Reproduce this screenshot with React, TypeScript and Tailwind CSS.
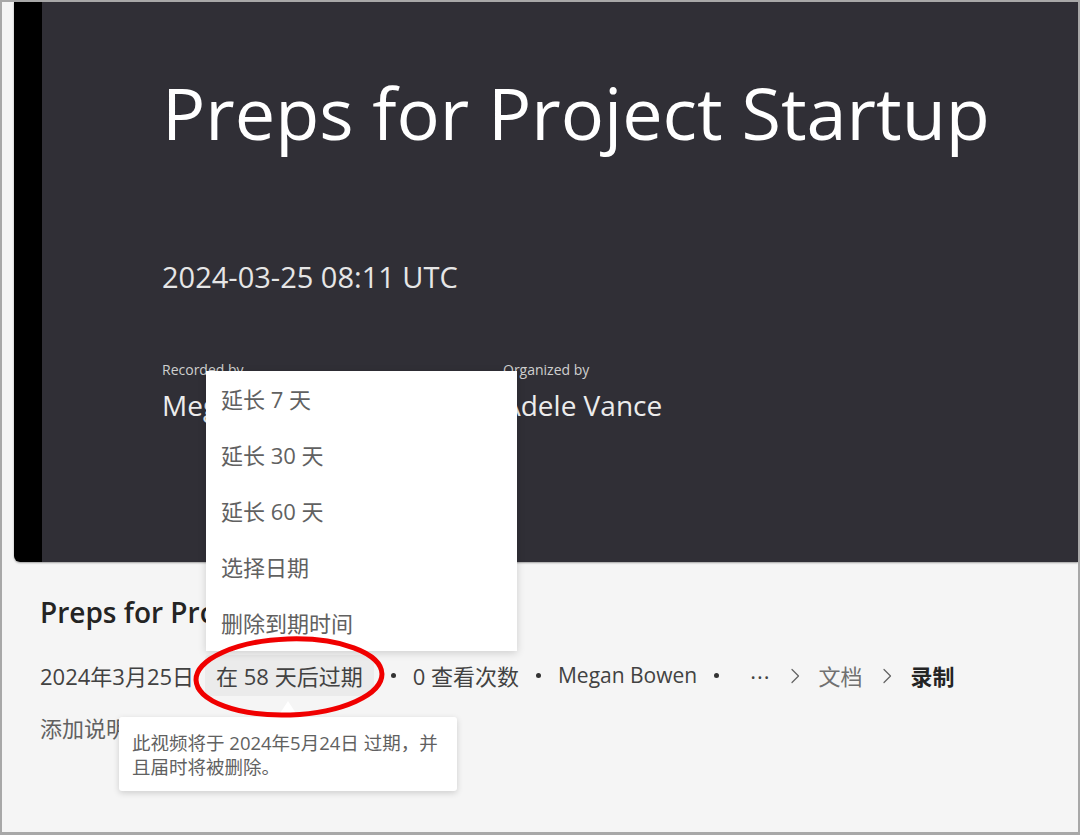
import React from 'react';

const menuItems = ['延长 7 天', '延长 30 天', '延长 60 天', '选择日期', '删除到期时间'];

function Dot() {
  return <span className="mx-[17px] w-[5px] h-[5px] rounded-full bg-[#333]" />;
}

function Chevron() {
  return (
    <svg className="w-[12px] h-[18px] mx-[18px]" viewBox="0 0 12 18" fill="none" stroke="#616161" strokeWidth={1.2}>
      <path d="M3 2.5L9.5 9L3 15.5" strokeLinecap="round" strokeLinejoin="round" />
    </svg>
  );
}

export default function App() {
  return (
    <div
      className="relative w-[1080px] h-[835px] overflow-hidden bg-[#f5f5f5] border-2 border-b-[3px] border-[#a8a8a8]"
      style={{ fontFamily: '"Open Sans", "Noto Sans CJK SC", sans-serif' }}
    >
      {/* Video thumbnail */}
      <div className="ml-3 h-[560px] flex rounded-bl-md overflow-hidden shadow-[0_1px_2px_rgba(0,0,0,0.35)]">
        <div className="w-[28px] bg-black" />
        <div className="flex-1 bg-[#302f36] pl-[120px] pt-[74px] text-white">
          <h2 className="text-[72px] leading-none">Preps for Project Startup</h2>
          <p className="mt-[114px] text-[29px] leading-none text-[#e6e6e6]">2024-03-25 08:11 UTC</p>
          <div className="mt-[72px] flex">
            <div className="w-[341px]">
              <p className="text-[14px] leading-none text-[#cfcfcf]">Recorded by</p>
              <p className="mt-[14px] text-[28px] leading-none text-[#ececec]">Megan Bowen</p>
            </div>
            <div>
              <p className="text-[14px] leading-none text-[#cfcfcf]">Organized by</p>
              <p className="mt-[14px] text-[28px] leading-none text-[#ececec]">Adele Vance</p>
            </div>
          </div>
        </div>
      </div>

      {/* Details */}
      <div className="pl-[38px]">
        <h1 className="mt-[36px] text-[28px] leading-none font-semibold text-[#242424]">Preps for Project Startup</h1>
        <div className="mt-[29px] h-[41px] flex items-center text-[22px] text-[#424242] leading-none">
          <span>2024年3月25日</span>
          <span className="ml-[11px] h-[41px] px-[11px] flex items-center rounded bg-[#ebebeb]">在 58 天后过期</span>
          <Dot />
          <span>0 查看次数</span>
          <Dot />
          <span className="text-[21px]">Megan Bowen</span>
          <Dot />
          <span className="ml-[14px] text-[#424242] tracking-[1px]">···</span>
          <Chevron />
          <span className="text-[#707070]">文档</span>
          <Chevron />
          <span className="font-bold text-[#242424]">录制</span>
        </div>
        <p className="mt-[21px] text-[22px] leading-none text-[#616161]">添加说明</p>
      </div>

      {/* Expiry menu */}
      <div className="absolute left-[204px] top-[369px] w-[311px] bg-white shadow-[0_2px_8px_rgba(0,0,0,0.16)]">
        {menuItems.map((item) => (
          <div key={item} className="h-[56px] flex items-center pl-[15px] text-[22px] leading-none text-[#616161]">
            {item}
          </div>
        ))}
      </div>

      {/* Tooltip */}
      <div className="absolute left-[275px] top-[699px] w-0 h-0 border-l-[11px] border-r-[11px] border-b-[17px] border-l-transparent border-r-transparent border-b-white" />
      <div className="absolute left-[117px] top-[715px] w-[338px] h-[74px] bg-white rounded-[3px] shadow-[0_2px_6px_rgba(0,0,0,0.16)] px-[13px] pt-[14px] text-[18.5px] leading-[24px] text-[#616161]">
        此视频将于 2024年5月24日 过期，并
        <br />
        且届时将被删除。
      </div>

      {/* Annotation */}
      <svg className="absolute left-[186px] top-[630px] w-[200px] h-[90px]" viewBox="0 0 200 90" fill="none">
        <ellipse cx="101" cy="45" rx="93" ry="38" stroke="#f00000" strokeWidth="5" transform="rotate(-2 100 45)" />
      </svg>
    </div>
  );
}
